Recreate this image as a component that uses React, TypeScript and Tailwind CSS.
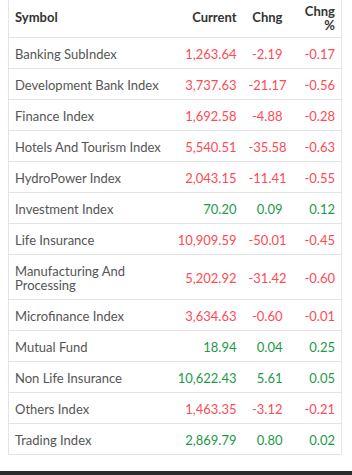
const rows = [
  { name: 'Banking SubIndex', current: '1,263.64', chng: '-2.19', pct: '-0.17' },
  { name: 'Development Bank Index', current: '3,737.63', chng: '-21.17', pct: '-0.56' },
  { name: 'Finance Index', current: '1,692.58', chng: '-4.88', pct: '-0.28' },
  { name: 'Hotels And Tourism Index', current: '5,540.51', chng: '-35.58', pct: '-0.63' },
  { name: 'HydroPower Index', current: '2,043.15', chng: '-11.41', pct: '-0.55' },
  { name: 'Investment Index', current: '70.20', chng: '0.09', pct: '0.12' },
  { name: 'Life Insurance', current: '10,909.59', chng: '-50.01', pct: '-0.45' },
  { name: 'Manufacturing And Processing', current: '5,202.92', chng: '-31.42', pct: '-0.60' },
  { name: 'Microfinance Index', current: '3,634.63', chng: '-0.60', pct: '-0.01' },
  { name: 'Mutual Fund', current: '18.94', chng: '0.04', pct: '0.25' },
  { name: 'Non Life Insurance', current: '10,622.43', chng: '5.61', pct: '0.05' },
  { name: 'Others Index', current: '1,463.35', chng: '-3.12', pct: '-0.21' },
  { name: 'Trading Index', current: '2,869.79', chng: '0.80', pct: '0.02' },
];

export default function App() {
  return (
    <div className="min-h-[475px] bg-white font-['Lato',sans-serif] text-[13px] leading-[14px]">
      <div className="pl-2 pb-4">
        <table className="w-[333px] table-fixed border-collapse border-x border-b border-[#e4e4e8]">
          <colgroup>
            <col className="w-[162px]" />
            <col className="w-[72px]" />
            <col className="w-[46px]" />
            <col className="w-[53px]" />
          </colgroup>
          <thead>
            <tr className="border-b border-[#e4e4e8] text-[#333] font-semibold">
              <th className="h-[37px] px-1.5 pb-[2px] text-left align-middle">Symbol</th>
              <th className="px-1.5 pb-[2px] text-right align-middle">Current</th>
              <th className="px-1.5 pb-[2px] text-right align-middle">Chng</th>
              <th className="px-1.5 pb-[1px] text-right align-middle">Chng %</th>
            </tr>
          </thead>
          <tbody>
            {rows.map((r) => {
              const color = r.chng.startsWith('-') ? 'text-[#ff4a54]' : 'text-[#1b9a48]';
              return (
                <tr key={r.name} className="border-b border-[#e4e4e8]">
                  <td className="px-1.5 pt-[9px] pb-[7px] text-[#555]">{r.name}</td>
                  <td className={`px-1.5 pt-[9px] pb-[7px] text-right ${color}`}>{r.current}</td>
                  <td className={`px-1.5 pt-[9px] pb-[7px] text-right ${color}`}>{r.chng}</td>
                  <td className={`px-1.5 pt-[9px] pb-[7px] text-right ${color}`}>{r.pct}</td>
                </tr>
              );
            })}
          </tbody>
        </table>
      </div>
      <div className="h-1 bg-[#2b2b2b]" />
    </div>
  );
}
